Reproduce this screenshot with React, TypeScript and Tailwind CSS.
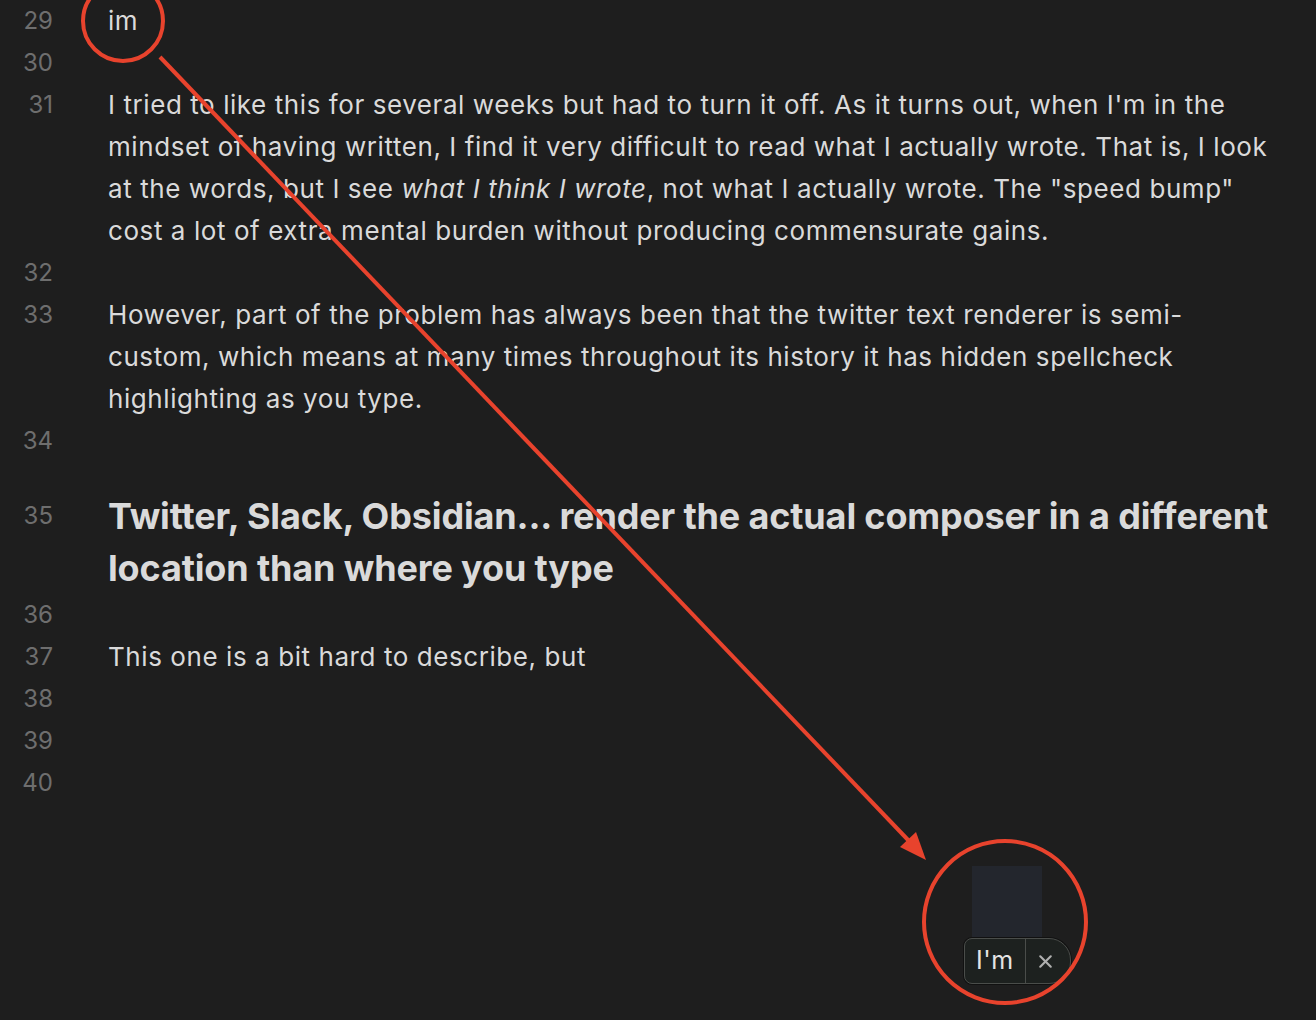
import React from "react";
import { X } from "lucide-react";

const font = { fontFamily: "Inter, 'Noto Sans', sans-serif" };

function Row({ n, children, heading }: { n: number; children?: React.ReactNode; heading?: boolean }) {
  if (heading) {
    return (
      <div className="flex pt-[28px]">
        <div className="w-[53px] shrink-0 text-right text-[24px] leading-[52px] text-[#6e6e6e]">{n}</div>
        <div className="ml-[55px] pr-[22px] text-[36px] font-bold leading-[52px] tracking-[-0.004em] text-[#dadada]">{children}</div>
      </div>
    );
  }
  return (
    <div className="flex">
      <div className="w-[53px] shrink-0 text-right text-[24px] leading-[42px] text-[#6e6e6e]">{n}</div>
      <div className="ml-[55px] min-h-[42px] pr-[40px] text-[26px] leading-[42px] tracking-[0.022em] text-[#dadada]">{children}</div>
    </div>
  );
}

export default function App() {
  return (
    <div className="relative h-[1020px] w-[1316px] overflow-hidden bg-[#1e1e1e]" style={font}>
      <div className="flex flex-col">
        <Row n={29}>im</Row>
        <Row n={30} />
        <Row n={31}>
          I tried to like this for several weeks but had to turn it off. As it turns out, when I'm in the mindset of having written, I find it very difficult to read what I actually wrote. That is, I look at the words, but I see <i>what I think I wrote</i>, not what I actually wrote. The "speed bump" cost a lot of extra mental burden without producing commensurate gains.
        </Row>
        <Row n={32} />
        <Row n={33}>
          However, part of the problem has always been that the twitter text renderer is semi-custom, which means at many times throughout its history it has hidden spellcheck highlighting as you type.
        </Row>
        <Row n={34} />
        <Row n={35} heading>
          Twitter, Slack, Obsidian... render the actual composer in a different location than where you type
        </Row>
        <Row n={36} />
        <Row n={37}>This one is a bit hard to describe, but</Row>
        <Row n={38} />
        <Row n={39} />
        <Row n={40} />
      </div>

      {/* spellcheck popup */}
      <div className="absolute left-[972px] top-[866px] h-[74px] w-[70px] bg-[#23262d]" />
      <div className="absolute left-[964px] top-[938px] flex h-[46px] items-stretch overflow-hidden rounded-l-[8px] rounded-r-[22px] border border-[#4a4d4a] bg-[#1d211f] shadow-[0_0_0_1px_#111]">
        <div className="flex items-center px-[11px] text-[25px] tracking-[0.02em] text-[#e4e4e4]">I'm</div>
        <div className="w-px bg-[#4a4d4a]" />
        <div className="flex w-[44px] items-center justify-center pr-[4px] text-[#b0b0b0]">
          <X size={21} strokeWidth={2.4} />
        </div>
      </div>

      {/* annotations */}
      <svg className="pointer-events-none absolute left-0 top-0" width="1316" height="1020" viewBox="0 0 1316 1020">
        <circle cx="123" cy="21" r="40" fill="none" stroke="#e8432d" strokeWidth="4" />
        <line x1="160" y1="57" x2="910" y2="842" stroke="#e8432d" strokeWidth="4" />
        <polygon points="926,860 900,847 916,832" fill="#e8432d" />
        <circle cx="1005" cy="922" r="81" fill="none" stroke="#e8432d" strokeWidth="4" />
      </svg>
    </div>
  );
}
